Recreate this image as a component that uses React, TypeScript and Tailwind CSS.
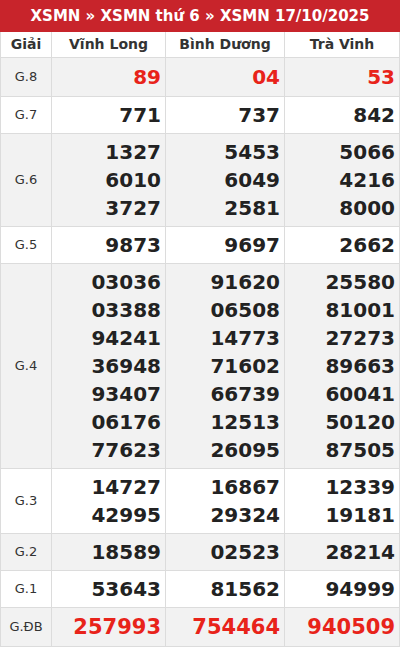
import React from "react";

type Row = { label: string; values: string[][]; red?: boolean; big?: boolean };

const provinces = ["Vĩnh Long", "Bình Dương", "Trà Vinh"];

const rows: Row[] = [
  { label: "G.8", values: [["89"], ["04"], ["53"]], red: true },
  { label: "G.7", values: [["771"], ["737"], ["842"]] },
  {
    label: "G.6",
    values: [
      ["1327", "6010", "3727"],
      ["5453", "6049", "2581"],
      ["5066", "4216", "8000"],
    ],
  },
  { label: "G.5", values: [["9873"], ["9697"], ["2662"]] },
  {
    label: "G.4",
    values: [
      ["03036", "03388", "94241", "36948", "93407", "06176", "77623"],
      ["91620", "06508", "14773", "71602", "66739", "12513", "26095"],
      ["25580", "81001", "27273", "89663", "60041", "50120", "87505"],
    ],
  },
  {
    label: "G.3",
    values: [
      ["14727", "42995"],
      ["16867", "29324"],
      ["12339", "19181"],
    ],
  },
  { label: "G.2", values: [["18589"], ["02523"], ["28214"]] },
  { label: "G.1", values: [["53643"], ["81562"], ["94999"]] },
  { label: "G.ĐB", values: [["257993"], ["754464"], ["940509"]], red: true, big: true },
];

const App = () => {
  return (
    <div className="w-[400px] h-[647px] bg-white font-['DejaVu_Sans',sans-serif] text-[#222]">
      {/* title bar */}
      <div className="h-[32px] bg-[#c8242b] flex items-center justify-center text-white font-bold text-[15px]">
        XSMN » XSMN thứ 6 » XSMN 17/10/2025
      </div>

      <div className="grid grid-cols-[51px_114px_119px_115px] border-l border-[#dcdcdc] w-[399px]">
        {/* head row */}
        <div className="h-[26px] flex items-center justify-center font-bold text-[14px] text-[#333] border-r border-b border-[#dcdcdc]">
          Giải
        </div>
        {provinces.map((p) => (
          <div
            key={p}
            className="h-[26px] flex items-center justify-center font-bold text-[14px] text-[#333] border-r border-b border-[#dcdcdc]"
          >
            {p}
          </div>
        ))}

        {rows.map((r, i) => {
          const bg = i % 2 === 0 ? "bg-[#f2f2f2]" : "bg-white";
          return (
            <React.Fragment key={r.label}>
              <div
                className={`${bg} flex items-center justify-center text-[13px] text-[#333] border-r border-b border-[#dcdcdc]`}
              >
                {r.label}
              </div>
              {r.values.map((col, j) => (
                <div
                  key={j}
                  className={`${bg} flex flex-col items-end justify-center py-[4px] pr-[4px] border-r border-b border-[#dcdcdc]`}
                >
                  {col.map((n) => (
                    <span
                      key={n}
                      className={`font-bold ${
                        r.red ? "text-[#e8231a] leading-[30px]" : "text-[#222] leading-[28px]"
                      } ${r.big ? "text-[21px]" : "text-[20px]"}`}
                    >
                      {n}
                    </span>
                  ))}
                </div>
              ))}
            </React.Fragment>
          );
        })}
      </div>
    </div>
  );
};

export default App;
